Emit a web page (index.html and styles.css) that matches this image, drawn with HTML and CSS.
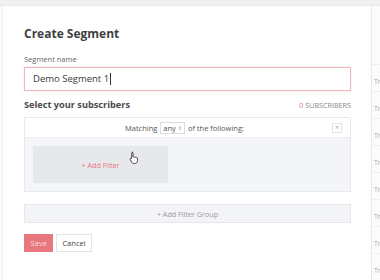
FILE: index.html
```html
<!DOCTYPE html>
<html lang="en">
  <head>
    <meta charset="UTF-8" />
    <title>Create Segment</title>
    <link rel="stylesheet" href="styles.css">
  </head>
  <body>
    <div class="topbar"></div>
    <div class="stage">
      <div class="gutter"></div>

      <div class="modal">
        <h2 class="modal-title">Create Segment</h2>

        <label class="field-label">Segment name</label>
        <div class="name-input">Demo Segment 1<span class="caret"></span></div>

        <div class="section-head">
          <h3>Select your subscribers</h3>
          <span class="count"><b>0</b> SUBSCRIBERS</span>
        </div>

        <div class="filter-group">
          <div class="group-head">
            <span>Matching</span>
            <span class="match-select">any <i>&#8661;</i></span>
            <span>of the following:</span>
            <span class="group-close">&times;</span>
          </div>
          <div class="group-body">
            <div class="add-filter">+ Add Filter</div>
            <svg class="pointer" width="11" height="13" viewBox="0 0 11 13">
              <path d="M3 1.2c.6 0 1 .4 1 1V6l.3-.1c.5-.3 1.1 0 1.3.4.4-.4 1.1-.3 1.4.2.4-.3 1.1-.1 1.3.4l.1.2.1 2.5c0 1.6-1.2 3-2.8 3H5c-1 0-1.8-.6-2.3-1.4L1.1 8.5c-.3-.5-.1-1 .4-1.2.4-.2.9 0 1.2.3V2.2c0-.6.4-1 1-1z" fill="#fff" stroke="#333" stroke-width=".9"/>
            </svg>
          </div>
        </div>

        <div class="add-group">+ Add Filter Group</div>

        <div class="actions">
          <button class="btn btn-save">Save</button>
          <button class="btn btn-cancel">Cancel</button>
        </div>
      </div>

      <div class="side">
        <div class="side-row"></div>
        <div class="side-row">Tr</div>
        <div class="side-row">Tr</div>
        <div class="side-row">Tr</div>
        <div class="side-row">Tr</div>
        <div class="side-row">Tr</div>
        <div class="side-row">Tr</div>
        <div class="side-row">Tr</div>
        <div class="side-row">Tr</div>
      </div>
    </div>
  </body>
</html>
```

FILE: styles.css
```css
* {
  margin: 0;
  padding: 0;
  box-sizing: border-box;
}

body {
  font-family: 'Open Sans', 'Liberation Sans', sans-serif;
  background: #fbfbfc;
  color: #444;
  width: 380px;
  height: 280px;
  overflow: hidden;
}

.topbar {
  height: 6px;
  background: #eef0f2;
  border-bottom: 1px solid #e6e8eb;
}

.stage {
  display: flex;
  height: 274px;
}

.gutter {
  flex-shrink: 0;
  width: 3px;
  border-right: 1px solid #eceef0;
}

.modal {
  flex-shrink: 0;
  width: 369px;
  background: #fff;
  border-right: 1px solid #e8e9ec;
  padding: 20px 20px 0 21px;
}

.modal-title {
  font-size: 12px;
  font-weight: 700;
  color: #3f3f3f;
  line-height: 16px;
}

.field-label {
  display: block;
  margin-top: 12px;
  font-size: 7.5px;
  color: #666;
  line-height: 10px;
}

.name-input {
  margin-top: 3px;
  height: 24px;
  border: 1px solid #efb7ba;
  box-shadow: 0 0 2px rgba(232, 115, 123, 0.25);
  padding-left: 8px;
  font-size: 9.5px;
  line-height: 22px;
  color: #3a3a3a;
  display: flex;
  align-items: center;
}

.caret {
  display: inline-block;
  width: 1px;
  height: 12px;
  background: #333;
  margin-left: 1px;
}

.section-head {
  display: flex;
  justify-content: space-between;
  align-items: center;
  margin-top: 6px;
  height: 16px;
}

.section-head h3 {
  font-size: 9.2px;
  font-weight: 700;
  color: #4a4a4a;
  line-height: 12px;
}

.count {
  font-size: 7.2px;
  color: #888;
  line-height: 10px;
}

.count b {
  font-weight: 400;
  color: #e8737b;
}

.filter-group {
  margin-top: 4px;
  border: 1px solid #e8e9ec;
}

.group-head {
  position: relative;
  height: 20px;
  display: flex;
  align-items: center;
  justify-content: center;
  gap: 3px;
  padding-right: 6px;
  font-size: 7.5px;
  color: #555;
  border-bottom: 1px solid #eceef1;
}

.match-select {
  display: flex;
  align-items: center;
  gap: 2px;
  border: 1px solid #dcdde0;
  padding: 0 2px;
  height: 12px;
  font-size: 7.5px;
}

.match-select i {
  font-style: normal;
  font-size: 5px;
  color: #999;
}

.group-close {
  position: absolute;
  right: 8px;
  top: 5px;
  width: 10px;
  height: 10px;
  border: 1px solid #e2e3e6;
  font-size: 7px;
  line-height: 8px;
  text-align: center;
  color: #aaa;
}

.group-body {
  position: relative;
  background: #f4f5f8;
  padding: 8px 0 8px 8px;
  height: 53px;
}

.add-filter {
  width: 135px;
  height: 37px;
  background: #e7e8eb;
  color: #e8737b;
  font-size: 7.2px;
  display: flex;
  align-items: center;
  justify-content: center;
}

.pointer {
  position: absolute;
  left: 104px;
  top: 13px;
}

.add-group {
  margin-top: 12px;
  height: 19px;
  background: #f3f4f7;
  border: 1px solid #e6e7ea;
  font-size: 7.2px;
  color: #999;
  display: flex;
  align-items: center;
  justify-content: center;
}

.actions {
  display: flex;
  gap: 3px;
  margin-top: 11px;
}

.btn {
  height: 18px;
  font-family: inherit;
  font-size: 7.5px;
  border: 1px solid transparent;
  padding: 0;
}

.btn-save {
  width: 29px;
  background: #e9777e;
  color: #fbd9db;
}

.btn-cancel {
  width: 36px;
  background: #fff;
  border-color: #e2e3e6;
  color: #444;
}

.side {
  flex: 1;
  min-width: 0;
  overflow: hidden;
  padding-top: 58px;
}

.side-row {
  height: 27px;
  border-top: 1px solid #eef0f2;
  font-size: 7px;
  color: #aaa;
  padding: 12px 0 0 2px;
  line-height: 10px;
}

.side-row:first-child {
  height: 0;
  border: 0;
  padding: 0;
}
```
